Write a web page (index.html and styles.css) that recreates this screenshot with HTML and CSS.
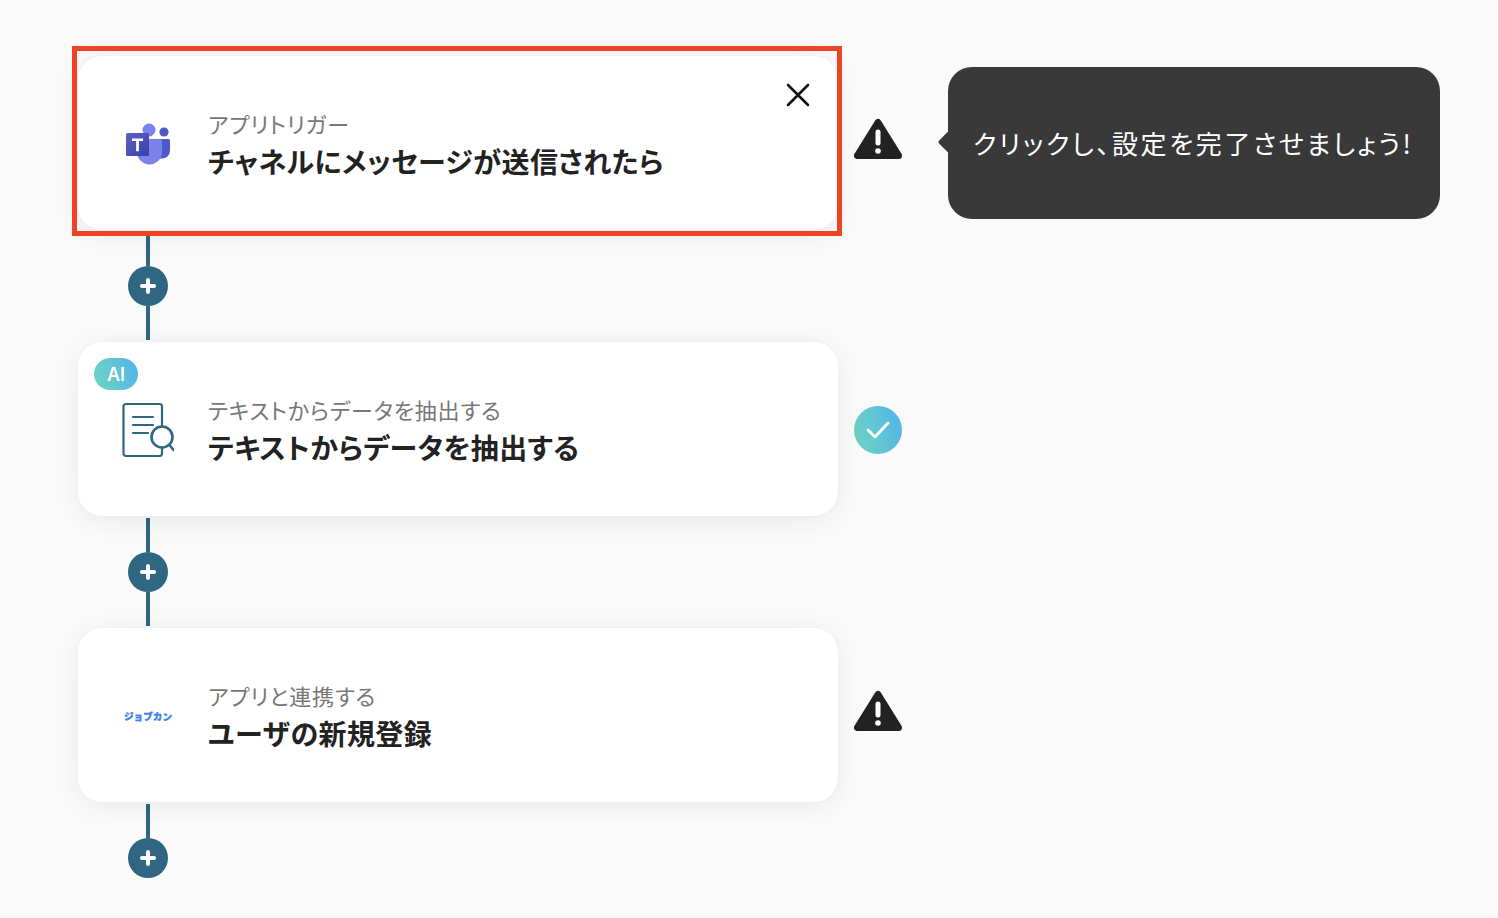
FILE: index.html
```html
<!DOCTYPE html>
<html lang="ja">
<head>
    <meta charset="UTF-8">
    <meta name="viewport" content="width=device-width, initial-scale=1.0">
    <title>フローボット</title>
    <link rel="stylesheet" href="styles.css">
</head>
<body>

    <main class="flow">

        <!-- Step 1 -->
        <div class="step">
            <div class="card card-selected">
                <div class="card-icon">
                    <svg width="48" height="48" viewBox="0 0 48 48">
                        <defs>
                            <linearGradient id="teamsTile" x1="0" y1="0" x2="1" y2="1">
                                <stop offset="0" stop-color="#5a62c3"/>
                                <stop offset="1" stop-color="#3940ab"/>
                            </linearGradient>
                        </defs>
                        <circle cx="40" cy="13" r="4.600" fill="#5059c9"/>
                        <path d="M29 20h15.500a1.500 1.500 0 0 1 1.500 1.500v10a8 8 0 0 1-8 8h-9z" fill="#5059c9"/>
                        <circle cx="25" cy="11" r="6.500" fill="#7b83eb"/>
                        <path d="M13 20h23a2 2 0 0 1 2 2v11a12.500 12.500 0 0 1-25 0z" fill="#7b83eb"/>
                        <rect x="2" y="14" width="23" height="23" rx="1.500" fill="url(#teamsTile)"/>
                        <path d="M8 19.500h11v2.400h-4.100v10.400h-2.800v-10.400h-4.100z" fill="#fff"/>
                    </svg>
                </div>
                <div class="card-text">
                    <p class="card-label">アプリトリガー</p>
                    <p class="card-title">チャネルにメッセージが送信されたら</p>
                </div>
                <svg class="close-icon" width="24" height="24" viewBox="0 0 24 24">
                    <path d="M2 2l20 20M22 2L2 22" stroke="#111" stroke-width="2.600" stroke-linecap="round"/>
                </svg>
            </div>
            <svg class="status-icon warning" width="48" height="42" viewBox="0 0 48 42">
                <path d="M24 4.500L3.500 37.500h41z" fill="#222" stroke="#222" stroke-width="7" stroke-linejoin="round"/>
                <path d="M24 14v11" stroke="#fff" stroke-width="5" stroke-linecap="round"/>
                <circle cx="24" cy="33" r="2.800" fill="#fff"/>
            </svg>
            <div class="tooltip">クリックし、設定を完了させましょう!</div>
        </div>

        <div class="connector">
            <span class="line"></span>
            <span class="add-btn"></span>
            <span class="line"></span>
        </div>

        <!-- Step 2 -->
        <div class="step">
            <div class="card">
                <span class="ai-badge">AI</span>
                <div class="card-icon">
                    <svg width="52" height="56" viewBox="0 0 52 56">
                        <path d="M29 55H4a2.500 2.500 0 0 1-2.500-2.500V5.500A2.500 2.500 0 0 1 4 3h33.500A2.500 2.500 0 0 1 40 5.500V25" fill="none" stroke="#2f6681" stroke-width="2.200"/>
                        <path d="M40 47v5.500a2.500 2.500 0 0 1-2.500 2.500H29" fill="none" stroke="#2f6681" stroke-width="2.200"/>
                        <path d="M11 16h20M11 24h20M11 32h15" stroke="#2f6681" stroke-width="2.200" stroke-linecap="round"/>
                        <circle cx="40" cy="36" r="10.500" fill="#fff" stroke="#2f6681" stroke-width="2.600"/>
                        <path d="M47.500 44l4 5" stroke="#2f6681" stroke-width="2.600" stroke-linecap="round"/>
                    </svg>
                </div>
                <div class="card-text">
                    <p class="card-label">テキストからデータを抽出する</p>
                    <p class="card-title">テキストからデータを抽出する</p>
                </div>
            </div>
            <span class="status-icon check">
                <svg width="24" height="20" viewBox="0 0 24 20">
                    <path d="M2 10l7 7L22 3" fill="none" stroke="#fff" stroke-width="2.800" stroke-linecap="round" stroke-linejoin="round"/>
                </svg>
            </span>
        </div>

        <div class="connector">
            <span class="line"></span>
            <span class="add-btn"></span>
            <span class="line"></span>
        </div>

        <!-- Step 3 -->
        <div class="step">
            <div class="card">
                <div class="card-icon">
                    <span class="jobcan-logo">ジョブカン</span>
                </div>
                <div class="card-text">
                    <p class="card-label">アプリと連携する</p>
                    <p class="card-title">ユーザの新規登録</p>
                </div>
            </div>
            <svg class="status-icon warning" width="48" height="42" viewBox="0 0 48 42">
                <path d="M24 4.500L3.500 37.500h41z" fill="#222" stroke="#222" stroke-width="7" stroke-linejoin="round"/>
                <path d="M24 14v11" stroke="#fff" stroke-width="5" stroke-linecap="round"/>
                <circle cx="24" cy="33" r="2.800" fill="#fff"/>
            </svg>
        </div>

        <div class="connector connector-end">
            <span class="line"></span>
            <span class="add-btn"></span>
        </div>

    </main>

</body>
</html>
```

FILE: styles.css
```css
/* Global Styles */
body {
    margin: 0;
    background-color: #fafafa;
    color: #222;
    font-family: "Noto Sans CJK JP", "Noto Sans", sans-serif;
    font-feature-settings: "palt";
    overflow: hidden;
}

p {
    margin: 0;
}

.flow {
    padding: 56px 0 0 78px;
}

/* Step row */
.step {
    display: flex;
    align-items: center;
}

/* Cards */
.card {
    position: relative;
    display: flex;
    align-items: center;
    flex-shrink: 0;
    gap: 36px;
    box-sizing: border-box;
    width: 760px;
    height: 174px;
    padding-left: 46px;
    background-color: #fff;
    border-radius: 24px;
    box-shadow: 0 0 2px rgba(0, 0, 0, 0.05), 0 4px 32px rgba(0, 0, 0, 0.07);
}

.card-selected::after {
    content: "";
    position: absolute;
    top: -10px;
    left: -6px;
    right: -4px;
    bottom: -6px;
    border: 5px solid #ee4325;
}

.card-icon {
    display: flex;
    align-items: center;
    justify-content: center;
    width: 48px;
    height: 56px;
}

.card-icon svg {
    flex-shrink: 0;
}

.card-text {
    padding-top: 2px;
}

.card-label {
    color: #777;
    font-size: 22px;
    line-height: 30px;
    letter-spacing: 0.8px;
}

.card-title {
    margin-top: 4px;
    font-size: 28px;
    font-weight: 700;
    line-height: 38px;
    letter-spacing: 0.4px;
}

.close-icon {
    position: absolute;
    top: 27px;
    right: 28px;
}

.ai-badge {
    position: absolute;
    top: 16px;
    left: 16px;
    width: 44px;
    height: 32px;
    border-radius: 16px;
    background: linear-gradient(70deg, #6fd6bf, #52b3ea);
    color: #fff;
    font-family: Inter, sans-serif;
    font-size: 18px;
    font-weight: 600;
    line-height: 33px;
    text-align: center;
}

.jobcan-logo {
    margin-top: 1px;
    color: #3d82ee;
    font-size: 9.600px;
    font-weight: 900;
    font-feature-settings: normal;
    white-space: nowrap;
    -webkit-text-stroke: 0.3px #3d82ee;
}

/* Status icons */
.status-icon {
    flex-shrink: 0;
    margin-left: 16px;
}

.warning {
    margin-top: -8px;
}

.check {
    display: flex;
    align-items: center;
    justify-content: center;
    width: 48px;
    height: 48px;
    margin-top: 2px;
    border-radius: 50%;
    background: linear-gradient(70deg, #6fd6bf, #52b3ea);
}

/* Tooltip */
.tooltip {
    position: relative;
    box-sizing: border-box;
    width: 492px;
    height: 152px;
    margin-left: 46px;
    padding-left: 25px;
    background-color: #393939;
    border-radius: 24px;
    color: #fff;
    font-size: 26px;
    line-height: 152px;
    letter-spacing: 2.600px;
    white-space: nowrap;
}

.tooltip::before {
    content: "";
    position: absolute;
    top: 67px;
    left: -7px;
    width: 16px;
    height: 16px;
    background-color: #393939;
    border-radius: 2px;
    transform: rotate(45deg);
}

/* Connectors between steps */
.connector {
    display: flex;
    flex-direction: column;
    align-items: center;
    width: 40px;
    height: 108px;
    margin: 2px 0 2px 50px;
}

.connector-end {
    height: 74px;
}

.line {
    width: 4px;
    flex: 1;
    background-color: #2f6681;
}

.add-btn {
    position: relative;
    flex-shrink: 0;
    width: 40px;
    height: 40px;
    border-radius: 50%;
    background-color: #2f6681;
}

.add-btn::before,
.add-btn::after {
    content: "";
    position: absolute;
    top: 18px;
    left: 12px;
    width: 16px;
    height: 4px;
    border-radius: 2px;
    background-color: #fff;
}

.add-btn::after {
    transform: rotate(90deg);
}
```
